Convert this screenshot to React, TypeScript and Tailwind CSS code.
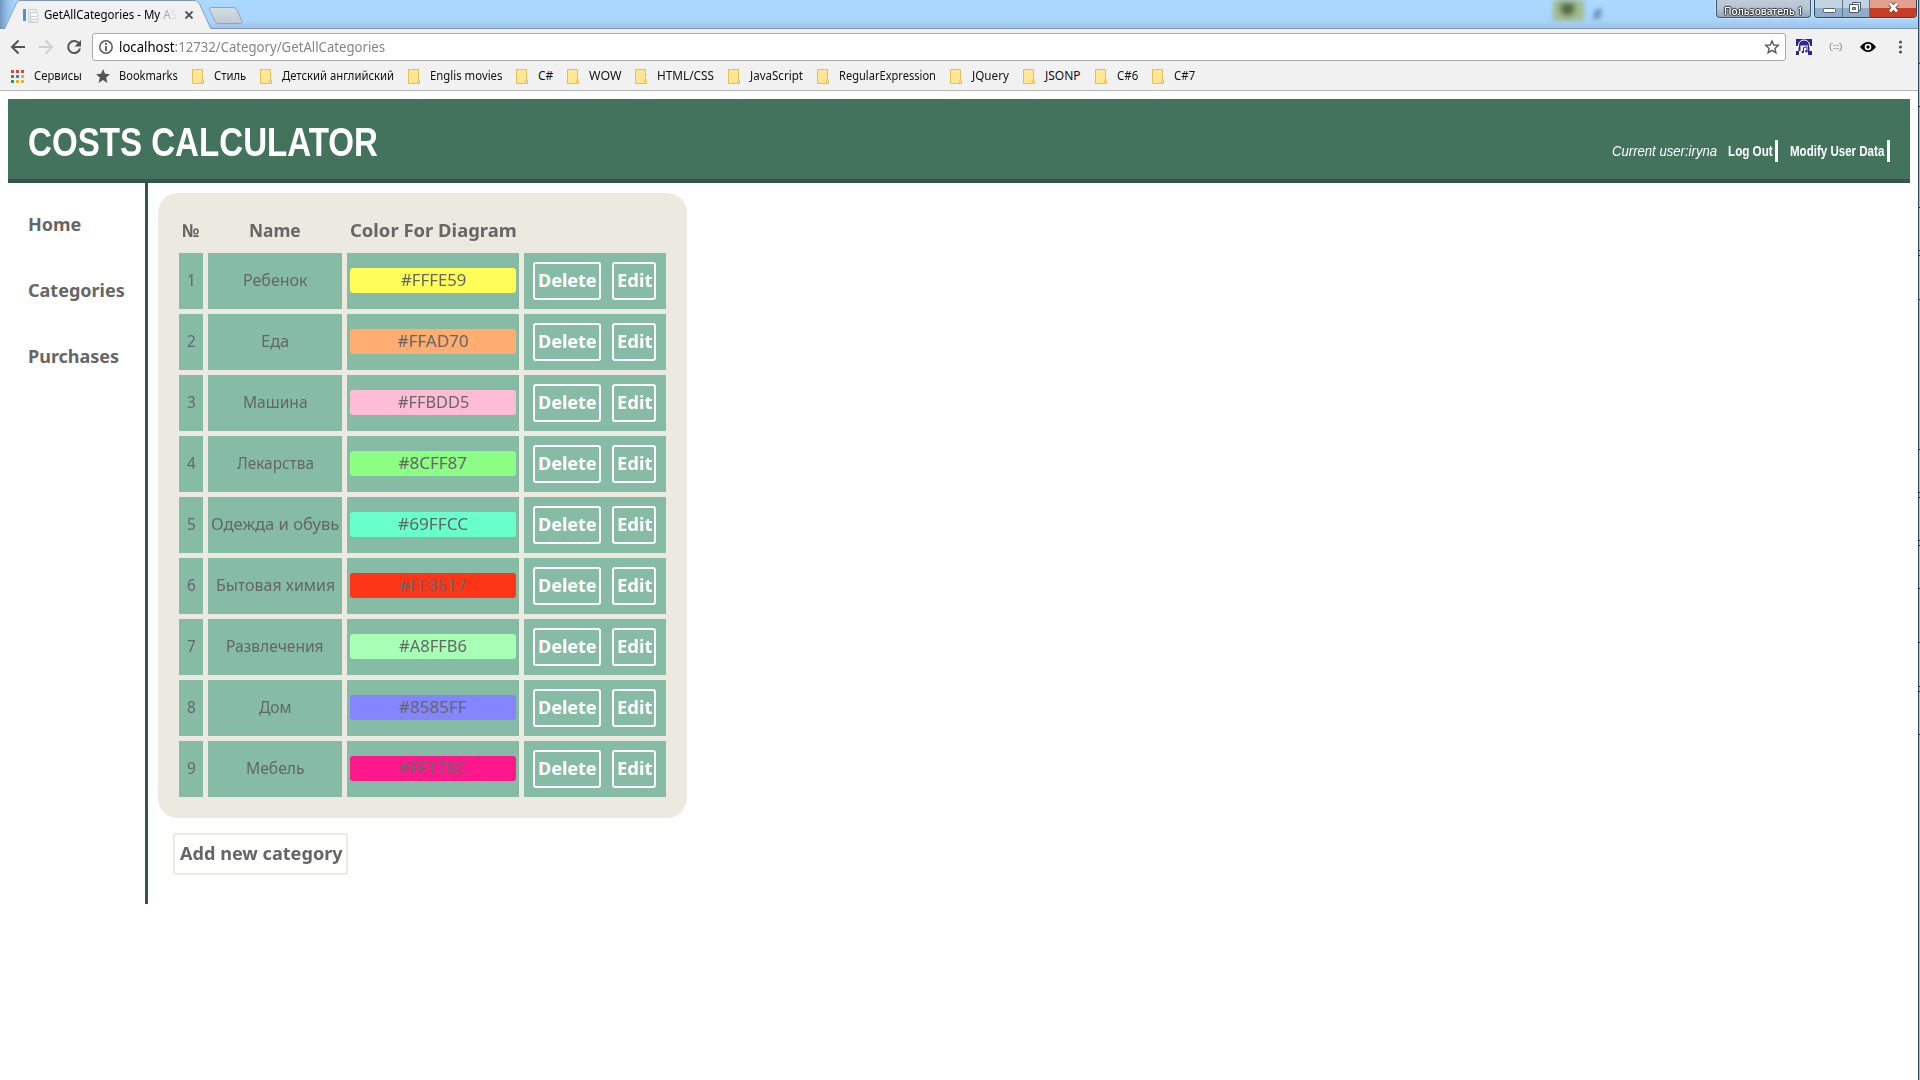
import React, { useLayoutEffect, useRef } from "react";

/* Text line stretched horizontally to a set width. */
function Fit({ w, children, className = "" }: { w: number; children: React.ReactNode; className?: string }) {
  const ref = useRef<HTMLSpanElement>(null);
  useLayoutEffect(() => {
    const el = ref.current;
    if (el) el.style.transform = `scaleX(${w / el.offsetWidth})`;
  }, [w]);
  return (
    <span className="inline-block whitespace-nowrap text-left" style={{ width: w }}>
      <span ref={ref} className={"inline-block origin-left whitespace-nowrap " + className}>{children}</span>
    </span>
  );
}

const bookmarks: [string, number][] = [
  ["Стиль", 32],
  ["Детский английский", 112],
  ["Englis movies", 72],
  ["C#", 15],
  ["WOW", 32],
  ["HTML/CSS", 57],
  ["JavaScript", 53],
  ["RegularExpression", 97],
  ["JQuery", 37],
  ["JSONP", 36],
  ["C#6", 21],
  ["C#7", 21],
];

const rows: [string, number, string, number][] = [
  ["Ребенок", 65, "#FFFE59", 65],
  ["Еда", 28, "#FFAD70", 71],
  ["Машина", 65, "#FFBDD5", 71],
  ["Лекарства", 77, "#8CFF87", 69],
  ["Одежда и обувь", 128, "#69FFCC", 70],
  ["Бытовая химия", 119, "#FF3517", 68],
  ["Развлечения", 98, "#A8FFB6", 68],
  ["Дом", 33, "#8585FF", 68],
  ["Мебель", 59, "#FF178C", 68],
];

/* Title-bar slivers of the windows behind, as [top margin, height]. */
const edgeSegments: [number, number][] = [
  [63, 44], [100, 44], [4, 45], [149, 44], [4, 44], [4, 44], [53, 45], [4, 44],
];

const Folder = () => (
  <svg width="13" height="15" viewBox="0 0 13 15" className="shrink-0">
    <path d="M.5.5h10v10.500l1 .5v3H.5z" fill="#ffe694" stroke="#e3bf55" />
    <path d="M9.500 14v-3l1.500-1v4" fill="#fff0ae" stroke="#e3bf55" strokeWidth=".8" />
  </svg>
);

function TabStrip() {
  return (
    <div className="relative h-[29px] bg-linear-to-b from-[#abd9ff] via-[#a9d4fb] via-70% to-[#9fc3ea]">
      <div className="absolute left-[1553px] top-0 h-[21px] w-[31px] bg-[#a3bd91] blur-[2px]" />
      <div className="absolute left-[1561px] top-[4px] h-[11px] w-[13px] rounded-b-full bg-[#46592f] blur-[3px]" />
      <div className="absolute left-[1594px] top-[9px] h-[10px] w-[7px] -skew-x-12 bg-[#6e94c4] blur-[2px]" />
      <svg className="absolute left-0 top-0" width="1918" height="29">
        <defs>
          <linearGradient id="nt" x2="0" y2="1"><stop stopColor="#d5dce4" /><stop offset="1" stopColor="#c0c9d2" /></linearGradient>
          <linearGradient id="corner"><stop stopColor="#6f93bd" /><stop offset="1" stopColor="#a9d4fb" stopOpacity="0" /></linearGradient>
        </defs>
        <rect width="18" height="28" fill="url(#corner)" />
        <path d="M0 28.500H5.500L16 4Q17.500 .5 21 .5H194Q198 .5 199.500 4L210 27Q211 28.500 213 28.500H1918" fill="none" stroke="#8095b0" />
        <path d="M5 29L16.500 4Q18 1 21 1H194Q197.500 1 199 4L210 28V29z" fill="#f1f1f1" />
        <path d="M211 7.500H233Q236 7.500 237 10L242 21Q242.500 23.500 240 23.500H219Q216 23.500 215 21L209.500 10Q209 7.500 211 7.500z" fill="url(#nt)" stroke="#8fa5bf" />
        <path d="M28.500 9.500h8v13h-8z" fill="#eef1f3" stroke="#c9d0d5" />
        <path d="M30.500 12.500h6l1.500 1.500v8h-7.500z" fill="#f7f8f8" stroke="#c9d0d5" />
        <path d="M31 16.500h6M31 19.500h6" stroke="#c5ced5" />
        <path d="M23 9h3v12h-3z" fill="#4b96ca" />
        <path d="M185.500 11.500l7 7m0-7l-7 7" stroke="#555" strokeWidth="1.800" />
      </svg>
      <div className="absolute left-[44px] top-[6px] h-[18px] font-['Noto_Sans'] text-[12px] leading-[18px] text-black">
        <Fit w={133}>GetAllCategories - My <span className="text-[#aaa]">A</span><span className="text-[#ddd]">S</span></Fit>
      </div>
      <div className="absolute left-[1716px] top-0 flex h-[18px] w-[95px] items-center justify-center rounded-b-[4px] border border-t-0 border-[#44576d] bg-linear-to-b from-[#c0ccd8] via-[#b5c4d4] via-50% to-[#93a9c1] shadow-[0_0_0_1px_#c9e2f8]">
        <Fit w={79} className="font-['Noto_Sans'] text-[11px] font-medium leading-[16px] text-white [text-shadow:-1px_0_1px_#333,1px_0_1px_#333,0_-1px_1px_#333,0_1px_1px_#333]">Пользователь 1</Fit>
      </div>
      <div className="absolute left-[1814px] top-0 flex h-[18px] w-[103px] overflow-hidden rounded-b-[4px] border border-t-0 border-[#33475e] shadow-[0_0_0_1px_#c9e2f8]">
        <div className="w-[28px] border-r border-[#61758d] bg-linear-to-b from-[#c4d3e2] from-50% to-[#92adc9] to-50%">
          <svg width="28" height="17"><rect x="8.500" y="8.500" width="12" height="4" rx="1" fill="#fff" stroke="#53606e" /></svg>
        </div>
        <div className="w-[27px] border-r border-[#61758d] bg-linear-to-b from-[#c4d3e2] from-50% to-[#92adc9] to-50%">
          <svg width="27" height="17" fill="none">
            <path d="M9.500 2.500h8v8h-8z" fill="#fff" stroke="#4c5967" />
            <path d="M6.500 4.500h9v8h-9z" fill="#fff" stroke="#4c5967" />
            <path d="M9.500 7.500h3v2h-3z" fill="#9eb2c7" stroke="#4c5967" />
          </svg>
        </div>
        <div className="flex-1 bg-linear-to-b from-[#e2a091] from-45% to-[#c53d25] to-50%">
          <svg width="46" height="17"><path d="M20 3.500l7 8m0-8l-7 8" stroke="#67362f" strokeWidth="4.500" /><path d="M20 3.500l7 8m0-8l-7 8" stroke="#fff" strokeWidth="2.800" /></svg>
        </div>
      </div>
    </div>
  );
}

function Toolbar() {
  return (
    <div className="flex h-[37px] items-center bg-[#f1f1f1]">
      <svg width="92" height="37" fill="none" className="shrink-0">
        <path d="M25 18H12.500M18.500 11.500L12 18l6.500 6.500" stroke="#555" strokeWidth="2" />
        <path d="M39 18h12.500M45.500 11.500L52 18l-6.500 6.500" stroke="#d0d0d0" strokeWidth="2" />
        <path d="M79 14.500A6 6 0 1 0 80 19.500" stroke="#555" strokeWidth="2" />
        <path d="M81 11v6.500h-6.500z" fill="#555" />
      </svg>
      <div className="mt-[-1px] flex h-[28px] w-[1694px] shrink-0 items-center rounded-[3px] border border-[#a9a9a9] bg-white">
        <svg width="26" height="26" fill="none" className="shrink-0"><circle cx="13" cy="13" r="6.200" stroke="#5a5a5a" strokeWidth="1.500" /><path d="M13 12v5M13 9v2" stroke="#5a5a5a" strokeWidth="1.800" /></svg>
        <div className="font-['Noto_Sans'] text-[14px] leading-[20px] text-[#858585]"><Fit w={266}><span className="text-black">localhost</span>:12732/Category/GetAllCategories</Fit></div>
        <svg width="28" height="26" viewBox="0 0 28 26" fill="none" className="ml-auto"><path d="M15 7l1.800 4 4.500.4-3.400 3 1 4.300L15 16.400l-3.900 2.300 1-4.300-3.400-3 4.500-.4z" stroke="#5a5a5a" strokeWidth="1.400" /></svg>
      </div>
      <svg width="132" height="37" fill="none">
        <rect x="10" y="10" width="16" height="16" fill="#2b2796" />
        <path d="M12.500 18v-2a5.500 5 0 0 1 11 0v2" stroke="#fff" />
        <path d="M10 17h2.500v5H10zM23.500 17H26v5h-2.500zM13 22h1.500v4H13zM14.500 16.500h7.500v9.500h-7.500z" fill="#fff" />
        <path d="M17.500 23v-4.500l3.500-.8v4.300" stroke="#2b2796" /><circle cx="16.800" cy="23" r="1.200" fill="#2b2796" /><circle cx="20.300" cy="22.200" r="1.200" fill="#2b2796" />
        <path d="M46.500 14.500h-1q-1 0-1 1v1.500l-1 1 1 1v1.500q0 1 1 1h1M53 14.500h1q1 0 1 1v1.500l1 1-1 1v1.500q0 1-1 1h-1" stroke="#8b8b8b" />
        <path d="M47.500 16.500h5M47.500 19.500h5" stroke="#999" strokeDasharray="2 1" />
        <path d="M74 18q8-10 16 0q-8 10-16 0z" fill="#000" /><circle cx="82" cy="18" r="3.300" fill="#fff" /><circle cx="82" cy="18" r="1.700" fill="#000" />
        <g fill="#555"><circle cx="114.500" cy="13" r="1.600" /><circle cx="114.500" cy="18" r="1.600" /><circle cx="114.500" cy="23" r="1.600" /></g>
      </svg>
    </div>
  );
}

function Bookmarks() {
  return (
    <div className="flex h-[25px] items-center border-b border-[#b6b6b6] bg-[#f1f1f1] pb-[4px] pl-[11px] font-['Noto_Sans'] text-[12px] leading-[18px] text-[#111]">
      <div className="grid grid-cols-3 gap-[2px]">
        {["bg-[#d9483b]", "bg-[#d9483b]", "bg-[#d9483b]", "bg-[#239b57]", "bg-[#3d7de0]", "bg-[#edb11c]", "bg-[#239b57]", "bg-[#edb11c]", "bg-[#edb11c]"].map((c, i) => <i key={i} className={"h-[3px] w-[3px] " + c} />)}
      </div>
      <div className="ml-[10px]"><Fit w={48}>Сервисы</Fit></div>
      <svg width="14" height="14" viewBox="0 0 14 14" className="ml-[14px] mr-[9px]"><path d="M7 0l2 4.800 5 .4-3.800 3.400L11.400 14 7 11 2.600 14l1.200-5.400L0 5.200l5-.4z" fill="#555" /></svg>
      <Fit w={59}>Bookmarks</Fit>
      <div className="ml-[14px] flex items-center">
        {bookmarks.map(([t, w]) => (
          <div key={t} className="mr-[14px] flex items-center gap-[9px]"><Folder /><Fit w={w}>{t}</Fit></div>
        ))}
      </div>
    </div>
  );
}

export default function App() {
  return (
    <div className="flex h-[1080px] w-[1920px] overflow-hidden bg-white">
      <div className="w-[1918px] shrink-0">
        <TabStrip />
        <Toolbar />
        <Bookmarks />
        <header className="ml-[8px] mt-[8px] flex h-[84px] w-[1902px] items-start justify-between border-b-4 border-[#35544a] bg-[#43725d] pl-[20px] pr-[20px] font-['Liberation_Sans'] text-white">
          <h1 className="mt-[20px] text-[40px] font-bold leading-[46px]"><Fit w={350}>COSTS CALCULATOR</Fit></h1>
          <div className="mt-[41px] flex h-[22px] items-center leading-[22px]">
            <Fit w={105} className="text-[15px] italic">Current user:iryna</Fit>
            <div className="ml-[11px] flex w-[50px] border-r-[3px] border-white text-[14px] font-bold"><Fit w={45}>Log Out</Fit></div>
            <div className="ml-[12px] flex w-[100px] border-r-[3px] border-white text-[14px] font-bold"><Fit w={94}>Modify User Data</Fit></div>
          </div>
        </header>
        <div className="ml-[8px] flex font-['Noto_Sans'] text-[#666]">
          <nav className="flex h-[721px] w-[140px] flex-col gap-[42px] border-r-[3px] border-[#35544a] pl-[20px] pt-[29px] text-[18px] font-bold leading-[24px]">
            <Fit w={53}>Home</Fit>
            <Fit w={97}>Categories</Fit>
            <Fit w={91}>Purchases</Fit>
          </nav>
          <main className="ml-[10px] mt-[10px]">
            <section className="h-[625px] w-[529px] rounded-[20px] bg-[#ebe9e0] px-[21px] pt-[20px]">
              <div className="grid h-[40px] grid-cols-[24px_134px_172px_142px] gap-x-[5px] pt-[5px] text-center text-[18px] font-bold leading-[24px]">
                <div><Fit w={18}>№</Fit></div>
                <div><Fit w={52}>Name</Fit></div>
                <div><Fit w={167}>Color For Diagram</Fit></div>
              </div>
              <div className="flex flex-col gap-[5px]">
                {rows.map(([name, w, color, cw], i) => (
                  <div key={color} className="grid h-[56px] grid-cols-[24px_134px_172px_142px] gap-x-[5px] text-[17px] leading-[24px]">
                    <div className="bg-[#86bba6] pt-[15px] text-center"><Fit w={9}>{i + 1}</Fit></div>
                    <div className="bg-[#86bba6] pt-[15px] text-center"><Fit w={w}>{name}</Fit></div>
                    <div className="bg-[#86bba6] px-[3px] pt-[15px]">
                      <div className="h-[25px] rounded-[3px] text-center" style={{ backgroundColor: color }}><Fit w={cw}>{color}</Fit></div>
                    </div>
                    <div className="flex gap-[11px] bg-[#86bba6] pl-[9px] pt-[9px] text-[18px] font-bold leading-[32px] text-white">
                      <div className="h-[38px] w-[68px] rounded-[3px] border-2 border-white pl-[3px]"><Fit w={59}>Delete</Fit></div>
                      <div className="h-[38px] w-[44px] rounded-[3px] border-2 border-white pl-[3px]"><Fit w={36}>Edit</Fit></div>
                    </div>
                  </div>
                ))}
              </div>
            </section>
            <div className="ml-[15px] mt-[15px] h-[42px] w-[175px] rounded-[3px] border-2 border-[#ebe9e0] pl-[5px] text-[18px] font-bold leading-[36px]"><Fit w={163}>Add new category</Fit></div>
          </main>
        </div>
      </div>
      <div className="w-[2px] border-l border-[#34495f] bg-[#9bb9d3]">
        {edgeSegments.map(([gap, h], i) => (
          <div key={i} className="border-y border-[#26323f] bg-[#a9c3d9]" style={{ marginTop: gap, height: h }} />
        ))}
      </div>
    </div>
  );
}
